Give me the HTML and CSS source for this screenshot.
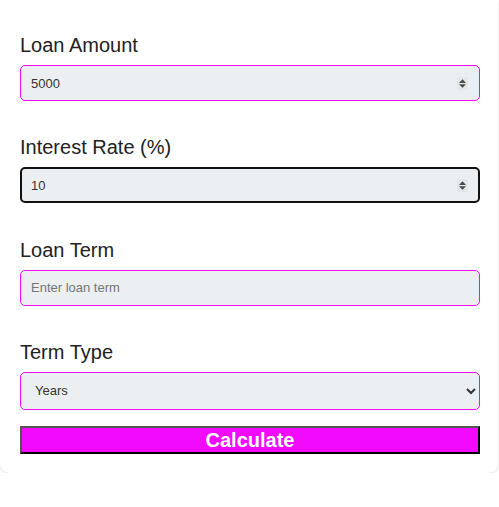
FILE: index.html
```html
<!DOCTYPE html>
<html>
<head>
<meta charset="utf-8">
<link rel="stylesheet" href="styles.css">
</head>
<body>
<form class="card">
  <div class="group">
    <label class="label" for="amount">Loan Amount</label>
    <div class="field">
      <input class="field-input" id="amount" type="text" value="5000">
      <svg class="spin" width="11" height="13" viewBox="0 0 11 13"><rect width="11" height="13" fill="#e4e6e8"/><path d="M2 6 L5.5 2.3 L9 6 Z M2 7.2 L9 7.2 L5.5 10.8 Z" fill="#4a4a4a"/></svg>
    </div>
  </div>
  <div class="group">
    <label class="label" for="rate">Interest Rate (%)</label>
    <div class="field field-focus">
      <input class="field-input" id="rate" type="text" value="10">
      <svg class="spin" width="11" height="13" viewBox="0 0 11 13"><rect width="11" height="13" fill="#e4e6e8"/><path d="M2 6 L5.5 2.3 L9 6 Z M2 7.2 L9 7.2 L5.5 10.8 Z" fill="#4a4a4a"/></svg>
    </div>
  </div>
  <div class="group">
    <label class="label" for="term">Loan Term</label>
    <div class="field">
      <input class="field-input" id="term" type="text" placeholder="Enter loan term">
    </div>
  </div>
  <div class="group group-last">
    <label class="label" for="type">Term Type</label>
    <select class="select" id="type">
      <option>Years</option>
      <option>Months</option>
    </select>
  </div>
  <button class="btn" type="button">Calculate</button>
</form>
</body>
</html>
```
FILE: styles.css
```css
html, body {
  margin: 0;
  padding: 0;
  background: #ffffff;
}
body {
  font-family: "Liberation Sans", Arial, sans-serif;
}
.card {
  display: flex;
  flex-direction: column;
  width: 460px;
  padding: 31px 18px 19px 20px;
  background: #ffffff;
  border-radius: 0 0 10px 10px;
  box-shadow: 0 1px 4px rgba(0, 0, 0, 0.12);
}
.group {
  display: flex;
  flex-direction: column;
  margin-bottom: 32.3px;
}
.group-last {
  margin-bottom: 16px;
}
.label {
  font-size: 20px;
  line-height: 28px;
  color: #222222;
  margin-bottom: 6px;
}
.field {
  display: flex;
  align-items: center;
  height: 36px;
  box-sizing: border-box;
  border: 1px solid #f20af2;
  border-radius: 5px;
  background: #eceff1;
  padding: 0 11px 0 10px;
}
.field-focus {
  border: 2px solid #111111;
  padding: 0 10px 0 9px;
}
.field-input {
  flex: 1;
  min-width: 0;
  border: none;
  outline: none;
  background: transparent;
  padding: 0;
  font-family: "Liberation Sans", Arial, sans-serif;
  font-size: 13px;
  color: #333333;
}
.field-input::placeholder {
  color: #757575;
}
.spin {
  flex: none;
}
.select {
  height: 38px;
  box-sizing: border-box;
  border: 1px solid #f20af2;
  border-radius: 5px;
  background: #eceff1;
  padding: 0 4px 0 10px;
  font-family: "Liberation Sans", Arial, sans-serif;
  font-size: 13px;
  color: #333333;
  outline: none;
}
.btn {
  height: 28px;
  box-sizing: border-box;
  border-style: solid;
  border-width: 2px;
  border-color: #555555 #000000 #000000 #555555;
  background: #f20aff;
  color: #ffffff;
  font-family: "Liberation Sans", Arial, sans-serif;
  font-weight: bold;
  font-size: 20px;
  line-height: 22px;
  padding: 0;
  cursor: pointer;
}
```
